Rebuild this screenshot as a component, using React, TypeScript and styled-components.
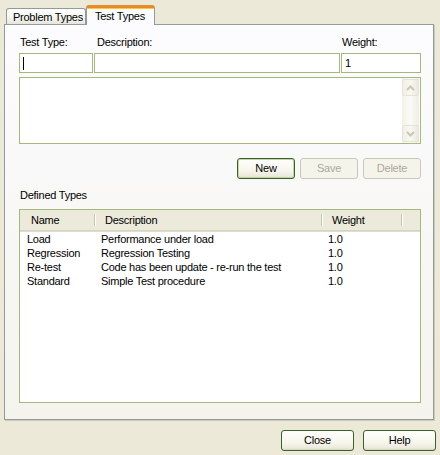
import React from 'react';
import styled, { createGlobalStyle } from 'styled-components';

const GlobalStyle = createGlobalStyle`
  html, body {
    margin: 0;
    padding: 0;
    background: #ece9d8;
  }
  body {
    font-family: "Liberation Sans", Arial, sans-serif;
    font-size: 11px;
    letter-spacing: -0.25px;
    color: #000;
  }
`;

const Dialog = styled.div`
  width: 440px;
  height: 455px;
  box-sizing: border-box;
  background: #ece9d8;
  display: flex;
  flex-direction: column;
`;

const TabStrip = styled.div`
  height: 25px;
  padding-left: 6px;
  display: flex;
  align-items: flex-end;
`;

const Tab = styled.div<{ $active?: boolean }>`
  box-sizing: border-box;
  height: ${(p) => (p.$active ? '20px' : '17px')};
  width: ${(p) => (p.$active ? '69px' : '80px')};
  padding-left: ${(p) => (p.$active ? '8px' : '6px')};
  line-height: 16px;
  border: 1px solid #919b9c;
  border-bottom: none;
  border-radius: 3px 3px 0 0;
  white-space: nowrap;
  background: ${(p) =>
    p.$active ? '#fcfcfe' : 'linear-gradient(#ffffff, #f3f3ef 60%, #e4e2d8)'};
  ${(p) =>
    p.$active &&
    `
    position: relative;
    z-index: 1;
    border-top: 3px solid #e68b2c;
    box-shadow: inset 0 1px 0 #ffc73c;
  `}
`;

const Panel = styled.div`
  margin: -1px 0 0 4px;
  width: 430px;
  height: 396px;
  box-sizing: border-box;
  border: 1px solid #919b9c;
  box-shadow: 1px 1px 0 #cdcabb;
  background: linear-gradient(#fcfcfe, #f4f3ee);
  padding: 11px 0 0 14px;
  display: flex;
  flex-direction: column;
`;

const FieldGrid = styled.div`
  display: grid;
  grid-template-columns: 74px 246px 80px;
  column-gap: 1px;
  row-gap: 4px;
`;

const Label = styled.div<{ $indent?: number }>`
  line-height: 13px;
  padding-left: ${(p) => p.$indent ?? 1}px;
  white-space: nowrap;
`;

const Field = styled.div`
  height: 20px;
  box-sizing: border-box;
  border: 1px solid #a5b97f;
  background: #fff;
  padding: 0 3px;
  line-height: 18px;
  display: flex;
  align-items: center;
`;

const Caret = styled.span`
  display: inline-block;
  width: 1px;
  height: 13px;
  background: #000;
`;

const Memo = styled.div`
  margin-top: 4px;
  width: 402px;
  height: 67px;
  box-sizing: border-box;
  border: 1px solid #a5b97f;
  background: #fff;
  display: flex;
  justify-content: flex-end;
`;

const ScrollBar = styled.div`
  width: 17px;
  margin-right: 1px;
  display: flex;
  flex-direction: column;
  justify-content: space-between;
  padding: 1px 0;
  background: linear-gradient(90deg, #f3f1e9, #fbfaf6 50%, #efede4);
`;

const ScrollButton = styled.div`
  width: 17px;
  height: 17px;
  box-sizing: border-box;
  border: 1px solid #e6e4d6;
  border-radius: 2px;
  background: linear-gradient(90deg, #f1efe6, #f8f7f1 50%, #ebe9de);
  display: flex;
  align-items: center;
  justify-content: center;
`;

const ButtonRow = styled.div`
  display: flex;
  justify-content: flex-end;
  gap: 5px;
  width: 402px;
  margin-top: 14px;
`;

const Button = styled.div<{ $disabled?: boolean; $default?: boolean }>`
  width: 58px;
  height: 21px;
  box-sizing: border-box;
  border: 1px solid ${(p) => (p.$disabled ? '#c9c7ba' : '#37622a')};
  border-radius: 3px;
  text-align: center;
  line-height: 19px;
  color: ${(p) => (p.$disabled ? '#aca899' : '#000')};
  background: ${(p) =>
    p.$disabled
      ? '#f5f4ea'
      : 'linear-gradient(#fffffb, #f7f6ee 60%, #ece9dc 90%, #d9d3c3)'};
  box-shadow: ${(p) => (p.$default ? 'inset 0 0 0 1px #c5d4a6' : 'none')};
`;

const SectionLabel = styled.div`
  margin-top: 10px;
  line-height: 13px;
  padding-left: 1px;
`;

const ListView = styled.div`
  margin-top: 7px;
  width: 402px;
  height: 194px;
  box-sizing: border-box;
  border: 1px solid #a5b97f;
  background: #fff;
`;

const HeaderRow = styled.div`
  display: grid;
  grid-template-columns: 75px 227px 80px 1fr;
  height: 20px;
  background: #ebeadb;
  border-bottom: 1px solid #d6d2c2;
  box-shadow: 0 1px 0 #e2decd;
`;

const HeaderCell = styled.div<{ $sep?: boolean }>`
  display: flex;
  align-items: center;
  padding-left: ${(p) => (p.$sep ? 10 : 11)}px;
  position: relative;
  white-space: nowrap;
  &::before {
    content: '';
    display: ${(p) => (p.$sep ? 'block' : 'none')};
    position: absolute;
    left: -1px;
    top: 4px;
    height: 12px;
    width: 1px;
    background: #c7c5b2;
    box-shadow: 1px 0 0 #fff;
  }
`;

const Rows = styled.div`
  padding-top: 1px;
`;

const Row = styled.div`
  display: grid;
  grid-template-columns: 75px 227px 80px 1fr;
  height: 14px;
  line-height: 14px;
`;

const Cell = styled.div<{ $first?: boolean }>`
  padding-left: ${(p) => (p.$first ? 7 : 6)}px;
  white-space: nowrap;
  overflow: hidden;
`;

const Footer = styled.div`
  display: flex;
  justify-content: flex-end;
  gap: 9px;
  padding: 10px 4px 0 0;
`;

const FooterButton = styled(Button)`
  width: 73px;
`;

const Arrow = ({ up }: { up?: boolean }) => (
  <svg width="9" height="6" viewBox="0 0 9 6">
    <polyline
      points={up ? '1,5 4.5,1.5 8,5' : '1,1 4.5,4.5 8,1'}
      fill="none"
      stroke="#c8c6b6"
      strokeWidth="2"
    />
  </svg>
);

const types = [
  { name: 'Load', description: 'Performance under load', weight: '1.0' },
  { name: 'Regression', description: 'Regression Testing', weight: '1.0' },
  { name: 'Re-test', description: 'Code has been update - re-run the test', weight: '1.0' },
  { name: 'Standard', description: 'Simple Test procedure', weight: '1.0' },
];

function App() {
  return (
    <>
      <GlobalStyle />
      <Dialog>
        <TabStrip>
          <Tab>Problem Types</Tab>
          <Tab $active>Test Types</Tab>
        </TabStrip>
        <Panel>
          <FieldGrid>
            <Label>Test Type:</Label>
            <Label $indent={3}>Description:</Label>
            <Label>Weight:</Label>
            <Field>
              <Caret />
            </Field>
            <Field />
            <Field>1</Field>
          </FieldGrid>
          <Memo>
            <ScrollBar>
              <ScrollButton>
                <Arrow up />
              </ScrollButton>
              <ScrollButton>
                <Arrow />
              </ScrollButton>
            </ScrollBar>
          </Memo>
          <ButtonRow>
            <Button $default>New</Button>
            <Button $disabled>Save</Button>
            <Button $disabled>Delete</Button>
          </ButtonRow>
          <SectionLabel>Defined Types</SectionLabel>
          <ListView>
            <HeaderRow>
              <HeaderCell>Name</HeaderCell>
              <HeaderCell $sep>Description</HeaderCell>
              <HeaderCell $sep>Weight</HeaderCell>
              <HeaderCell $sep />
            </HeaderRow>
            <Rows>
              {types.map((item) => (
                <Row key={`type-${item.name}`}>
                  <Cell $first>{item.name}</Cell>
                  <Cell>{item.description}</Cell>
                  <Cell>{item.weight}</Cell>
                  <Cell />
                </Row>
              ))}
            </Rows>
          </ListView>
        </Panel>
        <Footer>
          <FooterButton>Close</FooterButton>
          <FooterButton>Help</FooterButton>
        </Footer>
      </Dialog>
    </>
  );
}

export default App;
